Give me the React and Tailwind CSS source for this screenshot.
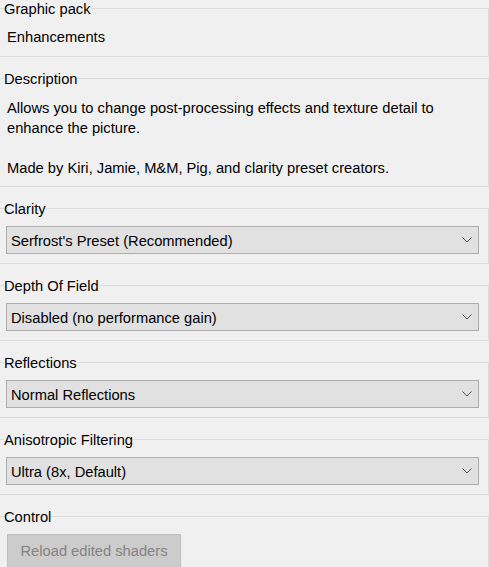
const selects = [
  { label: "Clarity", value: "Serfrost's Preset (Recommended)" },
  { label: "Depth Of Field", value: "Disabled (no performance gain)" },
  { label: "Reflections", value: "Normal Reflections" },
  { label: "Anisotropic Filtering", value: "Ultra (8x, Default)" },
];

function Group({ title, children }) {
  return (
    <fieldset className="w-full border border-l-0 border-[#dcdcdc] p-0">
      <legend className="ml-1 leading-4">
        <span className="relative top-px">{title}</span>
      </legend>
      {children}
    </fieldset>
  );
}

function Chevron() {
  return (
    <svg width="10" height="6" viewBox="0 0 10 6" className="shrink-0">
      <path d="M0.5 0.5 L5 5 L9.5 0.5" fill="none" stroke="#505050" strokeWidth="1" />
    </svg>
  );
}

export default function App() {
  return (
    <div
      className="h-[567px] w-[489px] overflow-hidden bg-[#f0f0f0] text-[14.7px] text-black flex flex-col gap-[13px]"
      style={{ fontFamily: '"Liberation Sans", Arial, sans-serif' }}
    >
      <Group title="Graphic pack">
        <div className="pl-[7px] pt-[11px] pb-[9px] leading-5">Enhancements</div>
      </Group>

      <Group title="Description">
        <div className="pl-[7px] pt-[12px] pb-[8px] leading-5 whitespace-nowrap">
          Allows you to change post-processing effects and texture detail to
          <br />
          enhance the picture.
          <br />
          <br />
          Made by Kiri, Jamie, M&amp;M, Pig, and clarity preset creators.
        </div>
      </Group>

      {selects.map((s) => (
        <Group key={s.label} title={s.label}>
          <div className="ml-[6px] mr-[9px] mt-[10px] mb-[9px] h-[28px] flex items-center justify-between border border-[#adadad] bg-[#e1e1e1] pl-[4px] pr-[6px]">
            <span className="relative top-px leading-5">{s.value}</span>
            <Chevron />
          </div>
        </Group>
      ))}

      <Group title="Control">
        <div className="pl-[7px] pt-[10px] pb-[10px]">
          <button
            disabled
            className="h-[34px] w-[174px] border border-[#bfbfbf] bg-[#cccccc] text-[#838383] leading-5"
          >
            Reload edited shaders
          </button>
        </div>
      </Group>
    </div>
  );
}
